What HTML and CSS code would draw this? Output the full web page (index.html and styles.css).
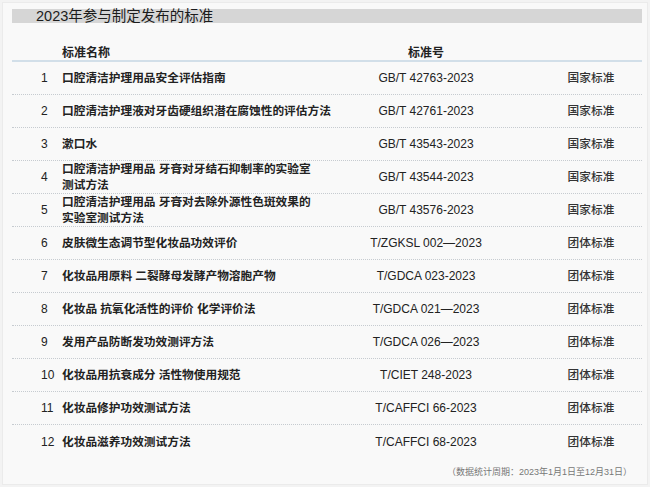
FILE: index.html
```html
<!DOCTYPE html>
<html lang="zh-CN">
<head>
<meta charset="utf-8">
<title>2023年参与制定发布的标准</title>
<link rel="stylesheet" href="styles.css">
</head>
<body>
<div class="frame">
  <div class="title-bar"><span class="title">2023年参与制定发布的标准</span></div>
  <div class="table">
    <div class="row head">
      <span></span><span class="name">标准名称</span><span class="code">标准号</span><span></span><span></span>
    </div>
    <div class="row"><span class="num">1</span><span class="name">口腔清洁护理用品安全评估指南</span><span class="code">GB/T 42763-2023</span><span></span><span class="type">国家标准</span></div>
    <div class="row"><span class="num">2</span><span class="name">口腔清洁护理液对牙齿硬组织潜在腐蚀性的评估方法</span><span class="code">GB/T 42761-2023</span><span></span><span class="type">国家标准</span></div>
    <div class="row"><span class="num">3</span><span class="name">漱口水</span><span class="code">GB/T 43543-2023</span><span></span><span class="type">国家标准</span></div>
    <div class="row"><span class="num">4</span><span class="name">口腔清洁护理用品 牙膏对牙结石抑制率的实验室<br>测试方法</span><span class="code">GB/T 43544-2023</span><span></span><span class="type">国家标准</span></div>
    <div class="row"><span class="num">5</span><span class="name">口腔清洁护理用品 牙膏对去除外源性色斑效果的<br>实验室测试方法</span><span class="code">GB/T 43576-2023</span><span></span><span class="type">国家标准</span></div>
    <div class="row"><span class="num">6</span><span class="name">皮肤微生态调节型化妆品功效评价</span><span class="code">T/ZGKSL 002—2023</span><span></span><span class="type">团体标准</span></div>
    <div class="row"><span class="num">7</span><span class="name">化妆品用原料 二裂酵母发酵产物溶胞产物</span><span class="code">T/GDCA 023-2023</span><span></span><span class="type">团体标准</span></div>
    <div class="row"><span class="num">8</span><span class="name">化妆品 抗氧化活性的评价 化学评价法</span><span class="code">T/GDCA 021—2023</span><span></span><span class="type">团体标准</span></div>
    <div class="row"><span class="num">9</span><span class="name">发用产品防断发功效测评方法</span><span class="code">T/GDCA 026—2023</span><span></span><span class="type">团体标准</span></div>
    <div class="row"><span class="num">10</span><span class="name">化妆品用抗衰成分 活性物使用规范</span><span class="code">T/CIET 248-2023</span><span></span><span class="type">团体标准</span></div>
    <div class="row"><span class="num">11</span><span class="name">化妆品修护功效测试方法</span><span class="code">T/CAFFCI 66-2023</span><span></span><span class="type">团体标准</span></div>
    <div class="row last"><span class="num">12</span><span class="name">化妆品滋养功效测试方法</span><span class="code">T/CAFFCI 68-2023</span><span></span><span class="type">团体标准</span></div>
  </div>
  <div class="note">（数据统计周期：2023年1月1日至12月31日）</div>
</div>
</body>
</html>
```

FILE: styles.css
```css
* { box-sizing: border-box; }
html, body { margin: 0; padding: 0; }
body {
  width: 650px;
  height: 487px;
  background: #f3f3f3;
  font-family: "Liberation Sans", "Noto Sans CJK SC", sans-serif;
  color: #222;
  overflow: hidden;
}
.frame {
  margin: 2px;
  height: 483px;
  background: #f9f9f9;
  border: 1px solid #ebebeb;
  padding: 6px 5px 0 9px;
}
.title-bar {
  height: 14px;
  background: #d6d6d6;
  padding-left: 24px;
  display: flex;
  align-items: center;
}
.title {
  font-size: 14.5px;
  line-height: 14px;
  color: #1c1c1c;
}
.table {
  margin-top: 22px;
}
.row {
  display: grid;
  grid-template-columns: 21px 294px 140px 1fr 80px;
  padding: 0 11px 0 29px;
  height: 33px;
  align-items: center;
  border-bottom: 1px dotted #c6cbd0;
  font-size: 11.7px;
  line-height: 16px;
}
.row.head {
  height: 17px;
  align-items: center;
  border-bottom: 2px solid #d2dfe9;
  font-weight: bold;
  font-size: 12px;
  color: #333;
}
.row.last { border-bottom: none; }
.num {
  font-size: 12px;
  color: #222;
}
.name {
  font-weight: bold;
  color: #222;
}
.code {
  text-align: center;
  font-size: 12px;
  color: #222;
}
.type {
  text-align: center;
  color: #333;
  font-weight: 500;
}
.note {
  margin-top: 8px;
  text-align: right;
  padding-right: 10px;
  font-size: 9px;
  line-height: 12px;
  color: #777;
}
```
